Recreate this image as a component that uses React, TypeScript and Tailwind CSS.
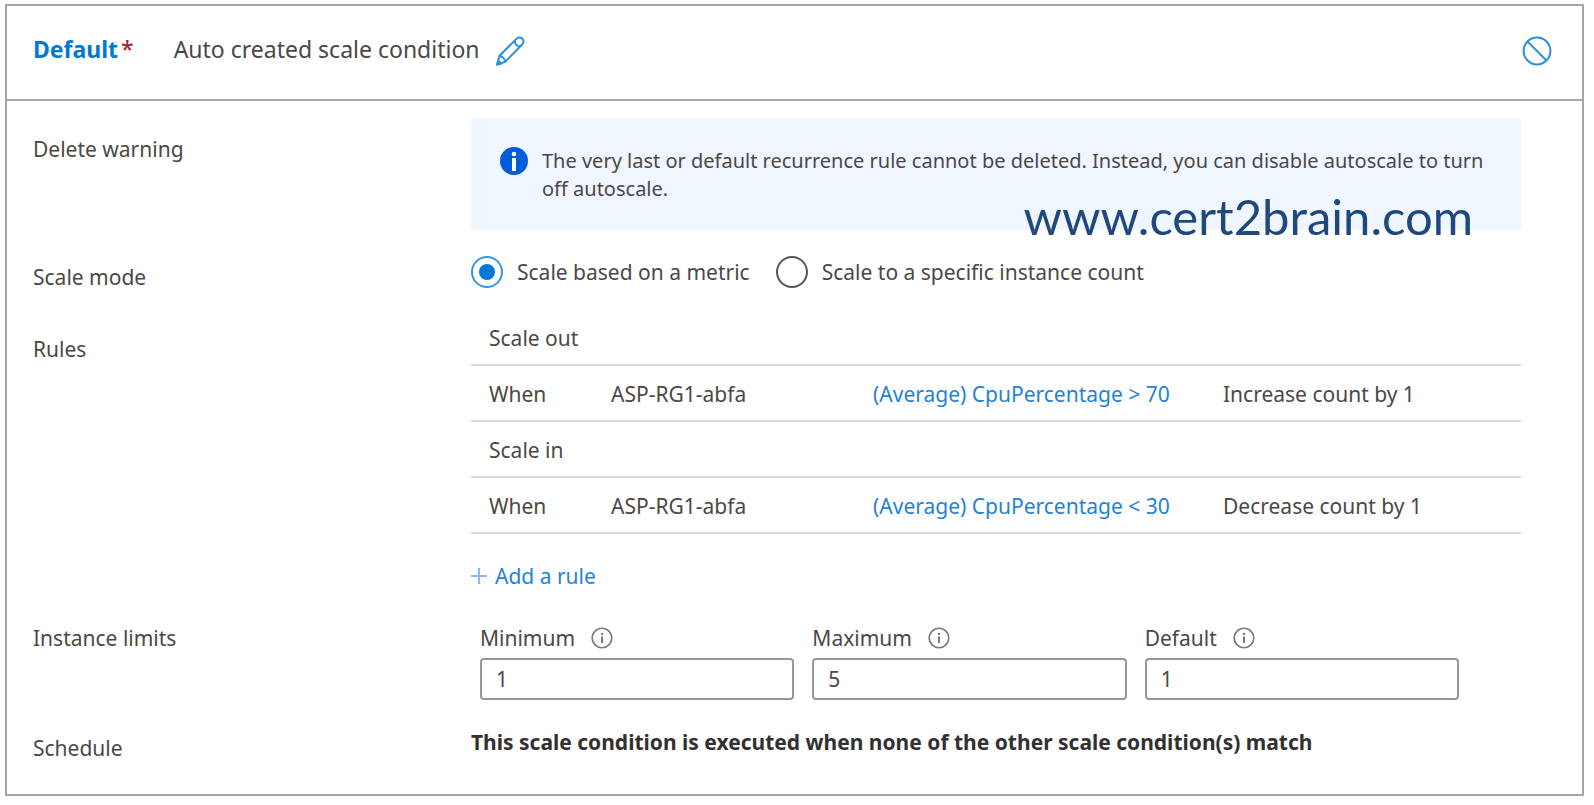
import { useState, type ReactNode } from 'react';

const REGLAS = [
  { titulo: 'Scale out', recurso: 'ASP-RG1-abfa', condicion: '(Average) CpuPercentage > 70', accion: 'Increase count by 1' },
  { titulo: 'Scale in', recurso: 'ASP-RG1-abfa', condicion: '(Average) CpuPercentage < 30', accion: 'Decrease count by 1' },
];

const radioCls =
  'grid size-8 appearance-none place-content-center rounded-full border-2 border-[#555] bg-white before:size-4 before:scale-0 before:rounded-full before:bg-[#0078d4] checked:border-[#3a96dd] checked:before:scale-100';

function IconoLapiz() {
  return (
    <svg width="29" height="30" viewBox="0 0 29 30" fill="none" stroke="#2b8fe0" strokeWidth="2" strokeLinejoin="round">
      <path d="M1.2 28.6 3.4 20 20.6 2.6a4 4 0 0 1 5.7 0 4 4 0 0 1 0 5.7L9.2 25.8Z" />
      <path d="M3.4 20c2.8 0 5.8 3 5.8 5.8M18.6 5q.6 4.8 5.4 5.6" />
      <path d="M1.2 28.6l1-4 3 3Z" fill="#2b8fe0" />
    </svg>
  );
}

function IconoProhibido() {
  return (
    <svg width="30" height="30" viewBox="0 0 30 30" fill="none" stroke="#2b8fe0" strokeWidth="2">
      <circle cx="15" cy="15" r="13.4" />
      <path d="M5.5 5.5l19 19" />
    </svg>
  );
}

function IconoAviso() {
  return (
    <svg className="shrink-0" width="28" height="28" viewBox="0 0 28 28">
      <circle cx="14" cy="14" r="14" fill="#015cda" />
      <circle cx="14" cy="7" r="2.3" fill="#fff" />
      <rect x="12" y="11" width="4" height="13" fill="#fff" />
    </svg>
  );
}

function IconoInfo() {
  return (
    <svg width="22" height="22" viewBox="0 0 22 22" fill="none" stroke="#7a7a7a" strokeWidth="1.6">
      <circle cx="11" cy="11" r="9.8" />
      <path d="M11 9.5v6.5M11 6v2" strokeWidth="2" />
    </svg>
  );
}

function Fila({ label, className, labelCls, children }: { label: string; className?: string; labelCls?: string; children: ReactNode }) {
  return (
    <section className={`flex ${className ?? ''}`}>
      <h2 className={`w-[438px] shrink-0 ${labelCls ?? ''}`}>{label}</h2>
      <div className="min-w-0 flex-1">{children}</div>
    </section>
  );
}

function Limite({ id, label, inicial }: { id: string; label: string; inicial: string }) {
  const [valor, setValor] = useState(inicial);
  return (
    <div className="flex-1">
      <div className="flex items-center gap-4">
        <label htmlFor={id}>{label}</label>
        <IconoInfo />
      </div>
      <input
        id={id}
        className="mt-1.5 block h-[42px] w-full rounded-sm border-2 border-[#9a9896] px-3.5"
        value={valor}
        onChange={(e) => setValor(e.target.value)}
      />
    </div>
  );
}

export default function App() {
  const [modo, setModo] = useState('metric');

  return (
    <main className="bg-white pt-1 pr-[10px] pb-2 pl-[5px] font-['Noto_Sans',sans-serif] text-[21px] leading-7 text-[#4a4846]">
      <div className="border-2 border-[#a6a6a6]">
        <header className="flex h-[95px] items-center border-b-2 border-[#a6a6a6] pr-[30px] pb-1 pl-[26px] text-[23px]">
          <h1 className="pb-1 font-bold text-[#0078d4]">
            Default<span className="pl-[3px] font-medium text-[#a4262c]">*</span>
          </h1>
          <p className="pb-1 pl-10">Auto created scale condition</p>
          <button type="button" aria-label="Edit name" className="ml-4">
            <IconoLapiz />
          </button>
          <button type="button" aria-label="Disable" className="ml-auto">
            <IconoProhibido />
          </button>
        </header>

        <div className="pt-[17px] pr-[61px] pb-8 pl-[26px]">
          <Fila label="Delete warning" labelCls="pt-[17px]">
            <div className="relative flex h-28 gap-3.5 rounded bg-[#eff6ff] pt-[29px] pr-6 pl-[29px]">
              <IconoAviso />
              <p className="text-[20px] leading-7">
                The very last or default recurrence rule cannot be deleted. Instead, you can disable autoscale to turn off autoscale.
              </p>
              <span className="absolute right-12 -bottom-1.5 font-['Lato',sans-serif] text-[49px] leading-10 text-[#1f497d]">
                www.cert2brain.com
              </span>
            </div>
          </Fila>

          <Fila label="Scale mode" className="mt-[26px]" labelCls="pt-[7px]">
            <div className="flex gap-[26px]">
              <label className="flex items-center gap-3.5">
                <input type="radio" name="modo" className={radioCls} checked={modo === 'metric'} onChange={() => setModo('metric')} />
                Scale based on a metric
              </label>
              <label className="flex items-center gap-3.5">
                <input type="radio" name="modo" className={radioCls} checked={modo === 'count'} onChange={() => setModo('count')} />
                Scale to a specific instance count
              </label>
            </div>
          </Fila>

          <Fila label="Rules" className="mt-[18px]" labelCls="pt-[26px]">
            <table className="w-full table-fixed border-collapse text-left">
              <colgroup>
                <col className="w-[122px]" />
                <col className="w-[262px]" />
                <col className="w-[350px]" />
                <col />
              </colgroup>
              {REGLAS.map((r) => (
                <tbody key={r.titulo}>
                  <tr className="h-14 border-b-2 border-[#dadada]">
                    <th colSpan={4} className="pt-0.5 pl-[18px] font-normal">{r.titulo}</th>
                  </tr>
                  <tr className="h-14 border-b-2 border-[#dadada]">
                    <td className="pt-0.5 pl-[18px]">When</td>
                    <td className="pt-0.5 pl-[18px]">{r.recurso}</td>
                    <td className="pt-0.5 pl-[18px]">
                      <a href="#" className="text-[#1f83d6]">{r.condicion}</a>
                    </td>
                    <td className="pt-0.5 pl-[18px]">{r.accion}</td>
                  </tr>
                </tbody>
              ))}
            </table>
            <button type="button" className="mt-7 flex items-center gap-2 text-[#1f83d6]">
              <svg width="16" height="16" viewBox="0 0 16 16" stroke="#8ab8ee" strokeWidth="2">
                <path d="M8 0v16M0 8h16" />
              </svg>
              Add a rule
            </button>
          </Fila>

          <Fila label="Instance limits" className="mt-[34px]">
            <div className="flex gap-[18px] pr-[62px] pl-[9px]">
              <Limite id="minimo" label="Minimum" inicial="1" />
              <Limite id="maximo" label="Maximum" inicial="5" />
              <Limite id="defecto" label="Default" inicial="1" />
            </div>
          </Fila>

          <Fila label="Schedule" className="mt-7" labelCls="pt-1.5">
            <p className="font-bold text-[#323130]">This scale condition is executed when none of the other scale condition(s) match</p>
          </Fila>
        </div>
      </div>
    </main>
  );
}
